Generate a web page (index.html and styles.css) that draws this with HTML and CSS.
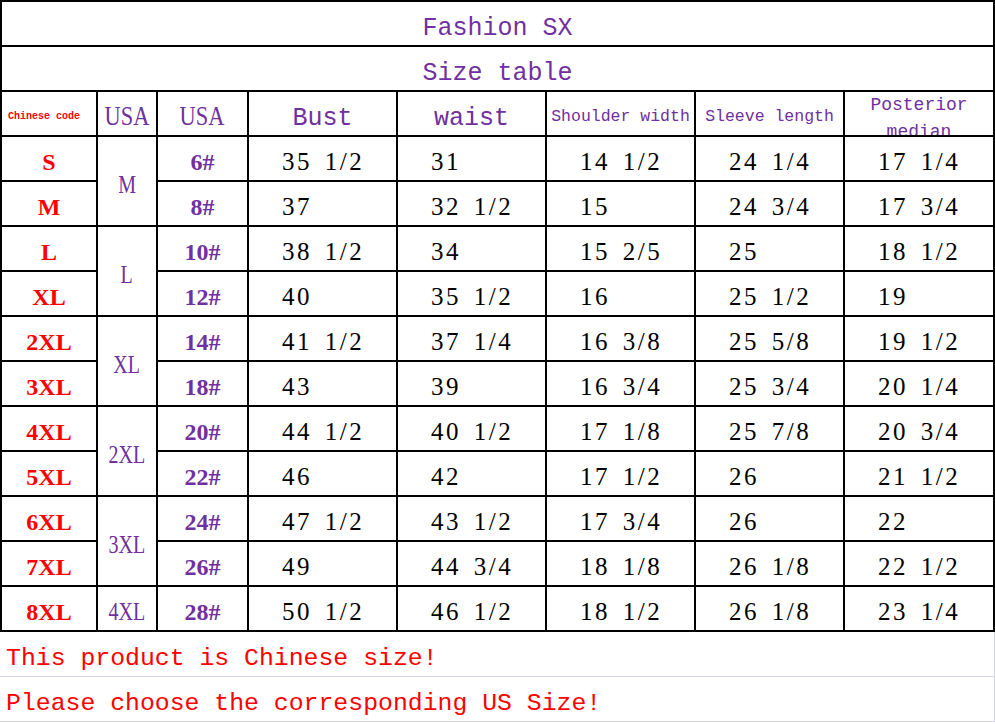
FILE: index.html
```html
<!DOCTYPE html>
<html>
<head>
<meta charset="utf-8">
<link rel="stylesheet" href="styles.css">
</head>
<body>
<div class="sheet">
<table class="size-table">
  <colgroup>
    <col class="c1"><col class="c2"><col class="c3"><col class="c4"><col class="c5"><col class="c6"><col class="c7"><col class="c8">
  </colgroup>
  <tr><td colspan="8" class="title">Fashion SX</td></tr>
  <tr><td colspan="8" class="title">Size table</td></tr>
  <tr class="head">
    <td class="cn-code">Chinese code</td>
    <td class="usa"><span class="narrow">USA</span></td>
    <td class="usa"><span class="narrow">USA</span></td>
    <td class="hbig">Bust</td>
    <td class="hbig">waist</td>
    <td class="hsmall">Shoulder width</td>
    <td class="hsmall">Sleeve length</td>
    <td class="hpost"><div class="clip">Posterior<br>median</div></td>
  </tr>
  <tr><td class="cn">S</td><td class="us" rowspan="2"><span class="narrow">M</span></td><td class="num">6#</td><td class="v">35 1/2</td><td class="v">31</td><td class="v">14 1/2</td><td class="v">24 1/4</td><td class="v">17 1/4</td></tr>
  <tr><td class="cn">M</td><td class="num">8#</td><td class="v">37</td><td class="v">32 1/2</td><td class="v">15</td><td class="v">24 3/4</td><td class="v">17 3/4</td></tr>
  <tr><td class="cn">L</td><td class="us" rowspan="2"><span class="narrow">L</span></td><td class="num">10#</td><td class="v">38 1/2</td><td class="v">34</td><td class="v">15 2/5</td><td class="v">25</td><td class="v">18 1/2</td></tr>
  <tr><td class="cn">XL</td><td class="num">12#</td><td class="v">40</td><td class="v">35 1/2</td><td class="v">16</td><td class="v">25 1/2</td><td class="v">19</td></tr>
  <tr><td class="cn">2XL</td><td class="us" rowspan="2"><span class="narrow">XL</span></td><td class="num">14#</td><td class="v">41 1/2</td><td class="v">37 1/4</td><td class="v">16 3/8</td><td class="v">25 5/8</td><td class="v">19 1/2</td></tr>
  <tr><td class="cn">3XL</td><td class="num">18#</td><td class="v">43</td><td class="v">39</td><td class="v">16 3/4</td><td class="v">25 3/4</td><td class="v">20 1/4</td></tr>
  <tr><td class="cn">4XL</td><td class="us" rowspan="2"><span class="narrow">2XL</span></td><td class="num">20#</td><td class="v">44 1/2</td><td class="v">40 1/2</td><td class="v">17 1/8</td><td class="v">25 7/8</td><td class="v">20 3/4</td></tr>
  <tr><td class="cn">5XL</td><td class="num">22#</td><td class="v">46</td><td class="v">42</td><td class="v">17 1/2</td><td class="v">26</td><td class="v">21 1/2</td></tr>
  <tr><td class="cn">6XL</td><td class="us" rowspan="2"><span class="narrow">3XL</span></td><td class="num">24#</td><td class="v">47 1/2</td><td class="v">43 1/2</td><td class="v">17 3/4</td><td class="v">26</td><td class="v">22</td></tr>
  <tr><td class="cn">7XL</td><td class="num">26#</td><td class="v">49</td><td class="v">44 3/4</td><td class="v">18 1/8</td><td class="v">26 1/8</td><td class="v">22 1/2</td></tr>
  <tr><td class="cn">8XL</td><td class="us"><span class="narrow">4XL</span></td><td class="num">28#</td><td class="v">50 1/2</td><td class="v">46 1/2</td><td class="v">18 1/2</td><td class="v">26 1/8</td><td class="v">23 1/4</td></tr>
</table>
<div class="notes">
  <div class="note">This product is Chinese size!</div>
  <div class="note">Please choose the corresponding US Size!</div>
</div>
</div>
</body>
</html>
```

FILE: styles.css
```css
html, body {
  margin: 0;
  padding: 0;
  background: #ffffff;
}

.sheet {
  width: 995px;
}

.size-table {
  border-collapse: collapse;
  table-layout: fixed;
  width: 995px;
}

.c1 { width: 96px; }
.c2 { width: 60px; }
.c3 { width: 91px; }
.c4 { width: 149px; }
.c5 { width: 149px; }
.c6 { width: 149px; }
.c7 { width: 149px; }
.c8 { width: 150px; }

.size-table tr {
  height: 45px;
}

.size-table td {
  box-sizing: border-box;
  border: 2px solid #000;
  padding: 7px 0 0 0;
  height: 45px;
  text-align: center;
  vertical-align: middle;
  white-space: nowrap;
  overflow: hidden;
}

.size-table td.title {
  font-family: "Liberation Mono", monospace;
  font-size: 25px;
  color: #7030a0;
  padding-top: 10px;
}

.size-table td.cn-code {
  font-family: "Liberation Mono", monospace;
  font-size: 10px;
  font-weight: bold;
  color: #ff0000;
  text-align: left;
  padding-left: 6px;
  padding-top: 5px;
}

.narrow {
  display: inline-block;
  transform: scaleX(0.8);
  transform-origin: center;
}

.size-table td.usa {
  font-family: "Liberation Serif", serif;
  font-size: 28px;
  color: #7030a0;
  padding-top: 4px;
}

.size-table td.hbig {
  font-family: "Liberation Mono", monospace;
  font-size: 25px;
  color: #7030a0;
  padding-top: 10px;
}

.size-table td.hsmall {
  font-family: "Liberation Mono", monospace;
  font-size: 16.5px;
  color: #7030a0;
  padding-top: 6px;
}

.size-table td.hpost {
  font-family: "Liberation Mono", monospace;
  font-size: 18px;
  color: #7030a0;
  vertical-align: top;
  padding-top: 0;
}

.clip {
  height: 43px;
  overflow: hidden;
  line-height: 27px;
  margin-top: 0;
}

.cn {
  font-family: "Liberation Serif", serif;
  font-size: 24px;
  font-weight: bold;
  color: #ff0000;
}

.us {
  font-family: "Liberation Serif", serif;
  font-size: 25px;
  color: #7030a0;
}

.num {
  font-family: "Liberation Serif", serif;
  font-size: 24px;
  font-weight: bold;
  color: #7030a0;
}

.size-table td.v {
  font-family: "Liberation Serif", serif;
  font-size: 25px;
  color: #000;
  text-align: left;
  padding-left: 33px;
  letter-spacing: 2.5px;
  word-spacing: 4px;
}

.notes {
  width: 994px;
  border-right: 1px solid #d4d4e2;
}

.note {
  box-sizing: border-box;
  height: 45px;
  border-bottom: 1px solid #d4d4e2;
  display: flex;
  align-items: center;
  padding-left: 6px;
  padding-top: 8px;
  font-family: "Liberation Mono", monospace;
  font-size: 24.8px;
  color: #ff0000;
}
```
